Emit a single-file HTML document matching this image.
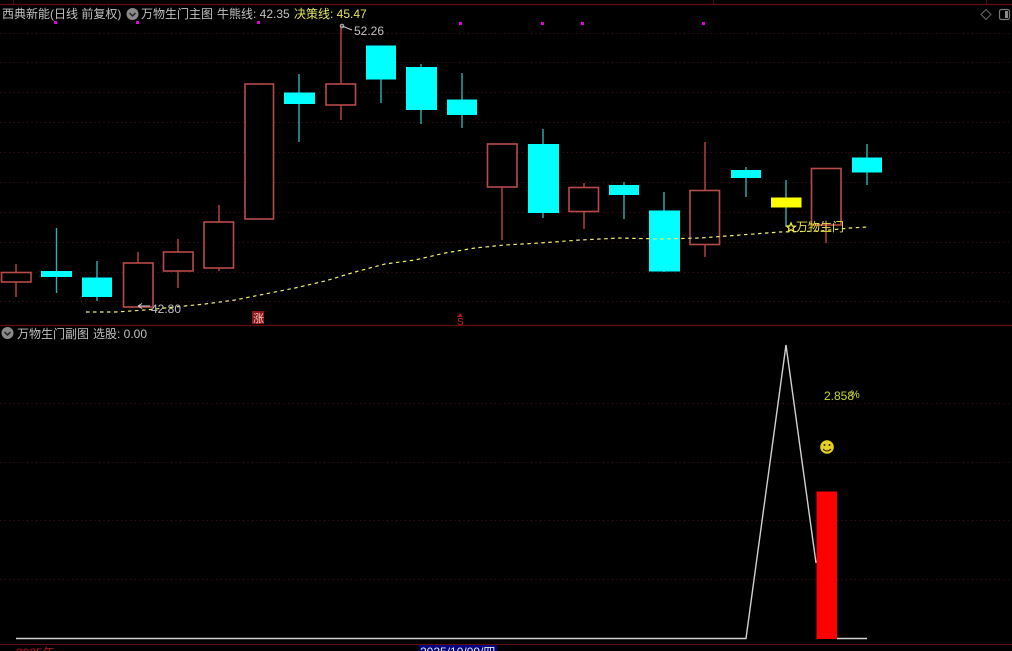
<!DOCTYPE html>
<html lang="zh"><head><meta charset="utf-8"><title>万物生门</title>
<style>
html,body{margin:0;padding:0;background:#000;width:1012px;height:651px;overflow:hidden}
svg{display:block;filter:blur(.3px)}
text{font-family:"Liberation Sans","Noto Sans CJK SC",sans-serif;font-size:12px}
</style></head><body>
<svg width="1012" height="651" viewBox="0 0 1012 651" xmlns="http://www.w3.org/2000/svg">
<rect width="1012" height="651" fill="#000"/>
<g stroke="#4a0c0c" stroke-width="1" fill="none">
<path d="M0 4.500H1012M0 325.500H1012" stroke="#640c0c" stroke-width="1.200"/>
<path d="M0 644.500H1012" stroke="#640c0c"/>
<path d="M13.500 0V4M713.500 0V4M986.500 0V4"/>
</g>
<g stroke="#4a1212" stroke-width="1" stroke-dasharray="1 3.500" fill="none">
<path d="M0 33.500H1012M0 62.500H1012M0 92.500H1012M0 122.500H1012M0 152.500H1012M0 182.500H1012M0 212.500H1012M0 242.500H1012M0 272.500H1012M0 301.500H1012"/>
<path d="M0 403.500H1012M0 462.500H1012M0 520.500H1012M0 579.500H1012"/>
</g>
<g fill="#e000e0">
<rect x="54" y="21" width="3" height="3"/><rect x="136" y="21" width="3" height="3"/><rect x="257" y="21" width="3" height="3"/><rect x="459" y="22" width="3" height="3"/><rect x="541" y="22" width="3" height="3"/><rect x="581" y="22" width="3" height="3"/><rect x="702" y="22" width="3" height="3"/>
</g>
<!-- red wicks -->
<g stroke="#b04040" stroke-width="1.500" fill="none">
<path d="M16 264V297M138 252V263M178 239V288M219 205V271M341 25V120M502 187V240M584 183V229M705 142V257M826 225V243"/>
</g>
<!-- cyan wicks -->
<g stroke="#2fb0b0" stroke-width="1.400" fill="none">
<path d="M56.500 228V293M97 261V301M299 74V142M381 79V103M421 64V124M462 73V128M543 129V218M624 182V219M664 192V272M746 167V197M786 180V226H790M867 144V185"/>
</g>
<!-- red bodies -->
<g stroke="#b84a4a" stroke-width="1.600" fill="#000">
<rect x="1.500" y="272.500" width="29.500" height="9.500"/>
<rect x="123.500" y="263" width="29.500" height="44"/>
<rect x="163.500" y="252" width="29.500" height="19"/>
<rect x="204" y="222" width="29.500" height="46"/>
<rect x="245" y="84" width="28.500" height="135"/>
<rect x="326" y="84" width="29.500" height="21"/>
<rect x="487.500" y="144" width="29.500" height="43"/>
<rect x="569" y="187.500" width="29.500" height="24"/>
<rect x="690" y="190.500" width="29.500" height="54"/>
<rect x="811.500" y="168.500" width="29.500" height="56.500"/>
</g>
<!-- cyan bodies -->
<g fill="#00ffff">
<rect x="41" y="271" width="31" height="6"/>
<rect x="82" y="277.500" width="30" height="19.500"/>
<rect x="284" y="92.500" width="31" height="11.500"/>
<rect x="366" y="45.500" width="30" height="34"/>
<rect x="406" y="67" width="31" height="43"/>
<rect x="447" y="99.500" width="30" height="15.500"/>
<rect x="528" y="144" width="31" height="69"/>
<rect x="609" y="185" width="30" height="10"/>
<rect x="649" y="210.500" width="31" height="61"/>
<rect x="731" y="170" width="30" height="8"/>
<rect x="852" y="157.500" width="30" height="15"/>
</g>
<rect x="771" y="197.500" width="30.500" height="10" fill="#ffff00"/>
<!-- yellow dashed line -->
<path d="M86 312L116 312 145 310 175 307 205 304 235 300 265 294 295 288 325 281 355 272 385 264 415 260 445 253 475 248 505 245 540 243 580 240 620 238 660 239 700 238 740 235 780 232 820 231 850 228 867 227" fill="none" stroke="#f0f070" stroke-width="1.200" stroke-dasharray="3.500 3.500"/>
<!-- annotations -->
<path d="M342 26L352 30" stroke="#c8c8c8" stroke-width="1.200"/>
<circle cx="342" cy="26" r="1.800" fill="none" stroke="#bbb"/>
<text x="354" y="35" fill="#c0c0c0">52.26</text>
<path d="M138 306H150M138 306L142 303.500M138 306L142 308.500" stroke="#d0d0d0" stroke-width="1" fill="none"/>
<text x="151" y="313" fill="#c0c0c0">42.80</text>
<rect x="252" y="311" width="12" height="13" fill="#8c1414"/>
<text x="253" y="322" fill="#f0c8c8" style="font-size:11px">涨</text>
<path d="M460 313L463 317H457Z" fill="#b01818"/>
<text x="457" y="325" fill="#d02020" style="font-size:10px">S</text>
<path d="M791 223L792.300 226 795.300 226.300 793 228.300 793.700 231.300 791 229.700 788.300 231.300 789 228.300 786.700 226.300 789.700 226Z" fill="none" stroke="#f0e840" stroke-width="1.300"/>
<text x="796" y="231" fill="#e8e040">万物生门</text>
<!-- header -->
<g>
<text x="2" y="18" fill="#c0c0c0">西典新能(日线 前复权)</text>
<circle cx="132.500" cy="14" r="6" fill="#8a8a8a"/>
<path d="M129.500 13L132.500 16 135.500 13" stroke="#222" stroke-width="1.500" fill="none"/>
<text x="141" y="18" fill="#c0c0c0">万物生门主图</text>
<text x="217" y="18" fill="#c0c0c0">牛熊线: 42.35</text>
<text x="294" y="18" fill="#e4e460">决策线: 45.47</text>
</g>
<path d="M986 9.500L991 14.500 986 19.500 981 14.500Z" fill="none" stroke="#666" stroke-width="1"/>
<rect x="999.500" y="9.500" width="10" height="10" rx="2" fill="none" stroke="#777" stroke-width="1.200"/>
<rect x="1005" y="11" width="3" height="7" fill="#888"/>
<!-- sub chart -->
<circle cx="7.500" cy="333" r="6" fill="#8a8a8a"/>
<path d="M4.500 332L7.500 335 10.500 332" stroke="#222" stroke-width="1.500" fill="none"/>
<text x="17" y="338" fill="#c0c0c0">万物生门副图</text>
<text x="93" y="338" fill="#c0c0c0">选股: 0.00</text>
<text x="824" y="400" fill="#c8d830">2.858</text>
<text x="850" y="398" fill="#c8d830" style="font-size:11px">%</text>
<circle cx="827" cy="447" r="6.800" fill="#e8d020"/>
<circle cx="824.500" cy="445" r="1" fill="#332200"/><circle cx="829.500" cy="445" r="1" fill="#332200"/>
<path d="M823 449Q827 453 831 449" stroke="#332200" stroke-width="1" fill="none"/>
<rect x="816.500" y="491.500" width="20.500" height="147.500" fill="#ff0000"/>
<path d="M16 638.500H746L786 345 816 563" fill="none" stroke="#d0d0d0" stroke-width="1.400"/>
<path d="M837 638.500H867" stroke="#d0d0d0" stroke-width="1.400"/>
<!-- bottom axis -->
<text x="16" y="657" fill="#b01818">2025年</text>
<rect x="419" y="645" width="78" height="8" fill="#000080"/>
<text x="420" y="656" fill="#e8e8e8">2025/10/09/四</text>
</svg>
</body></html>
